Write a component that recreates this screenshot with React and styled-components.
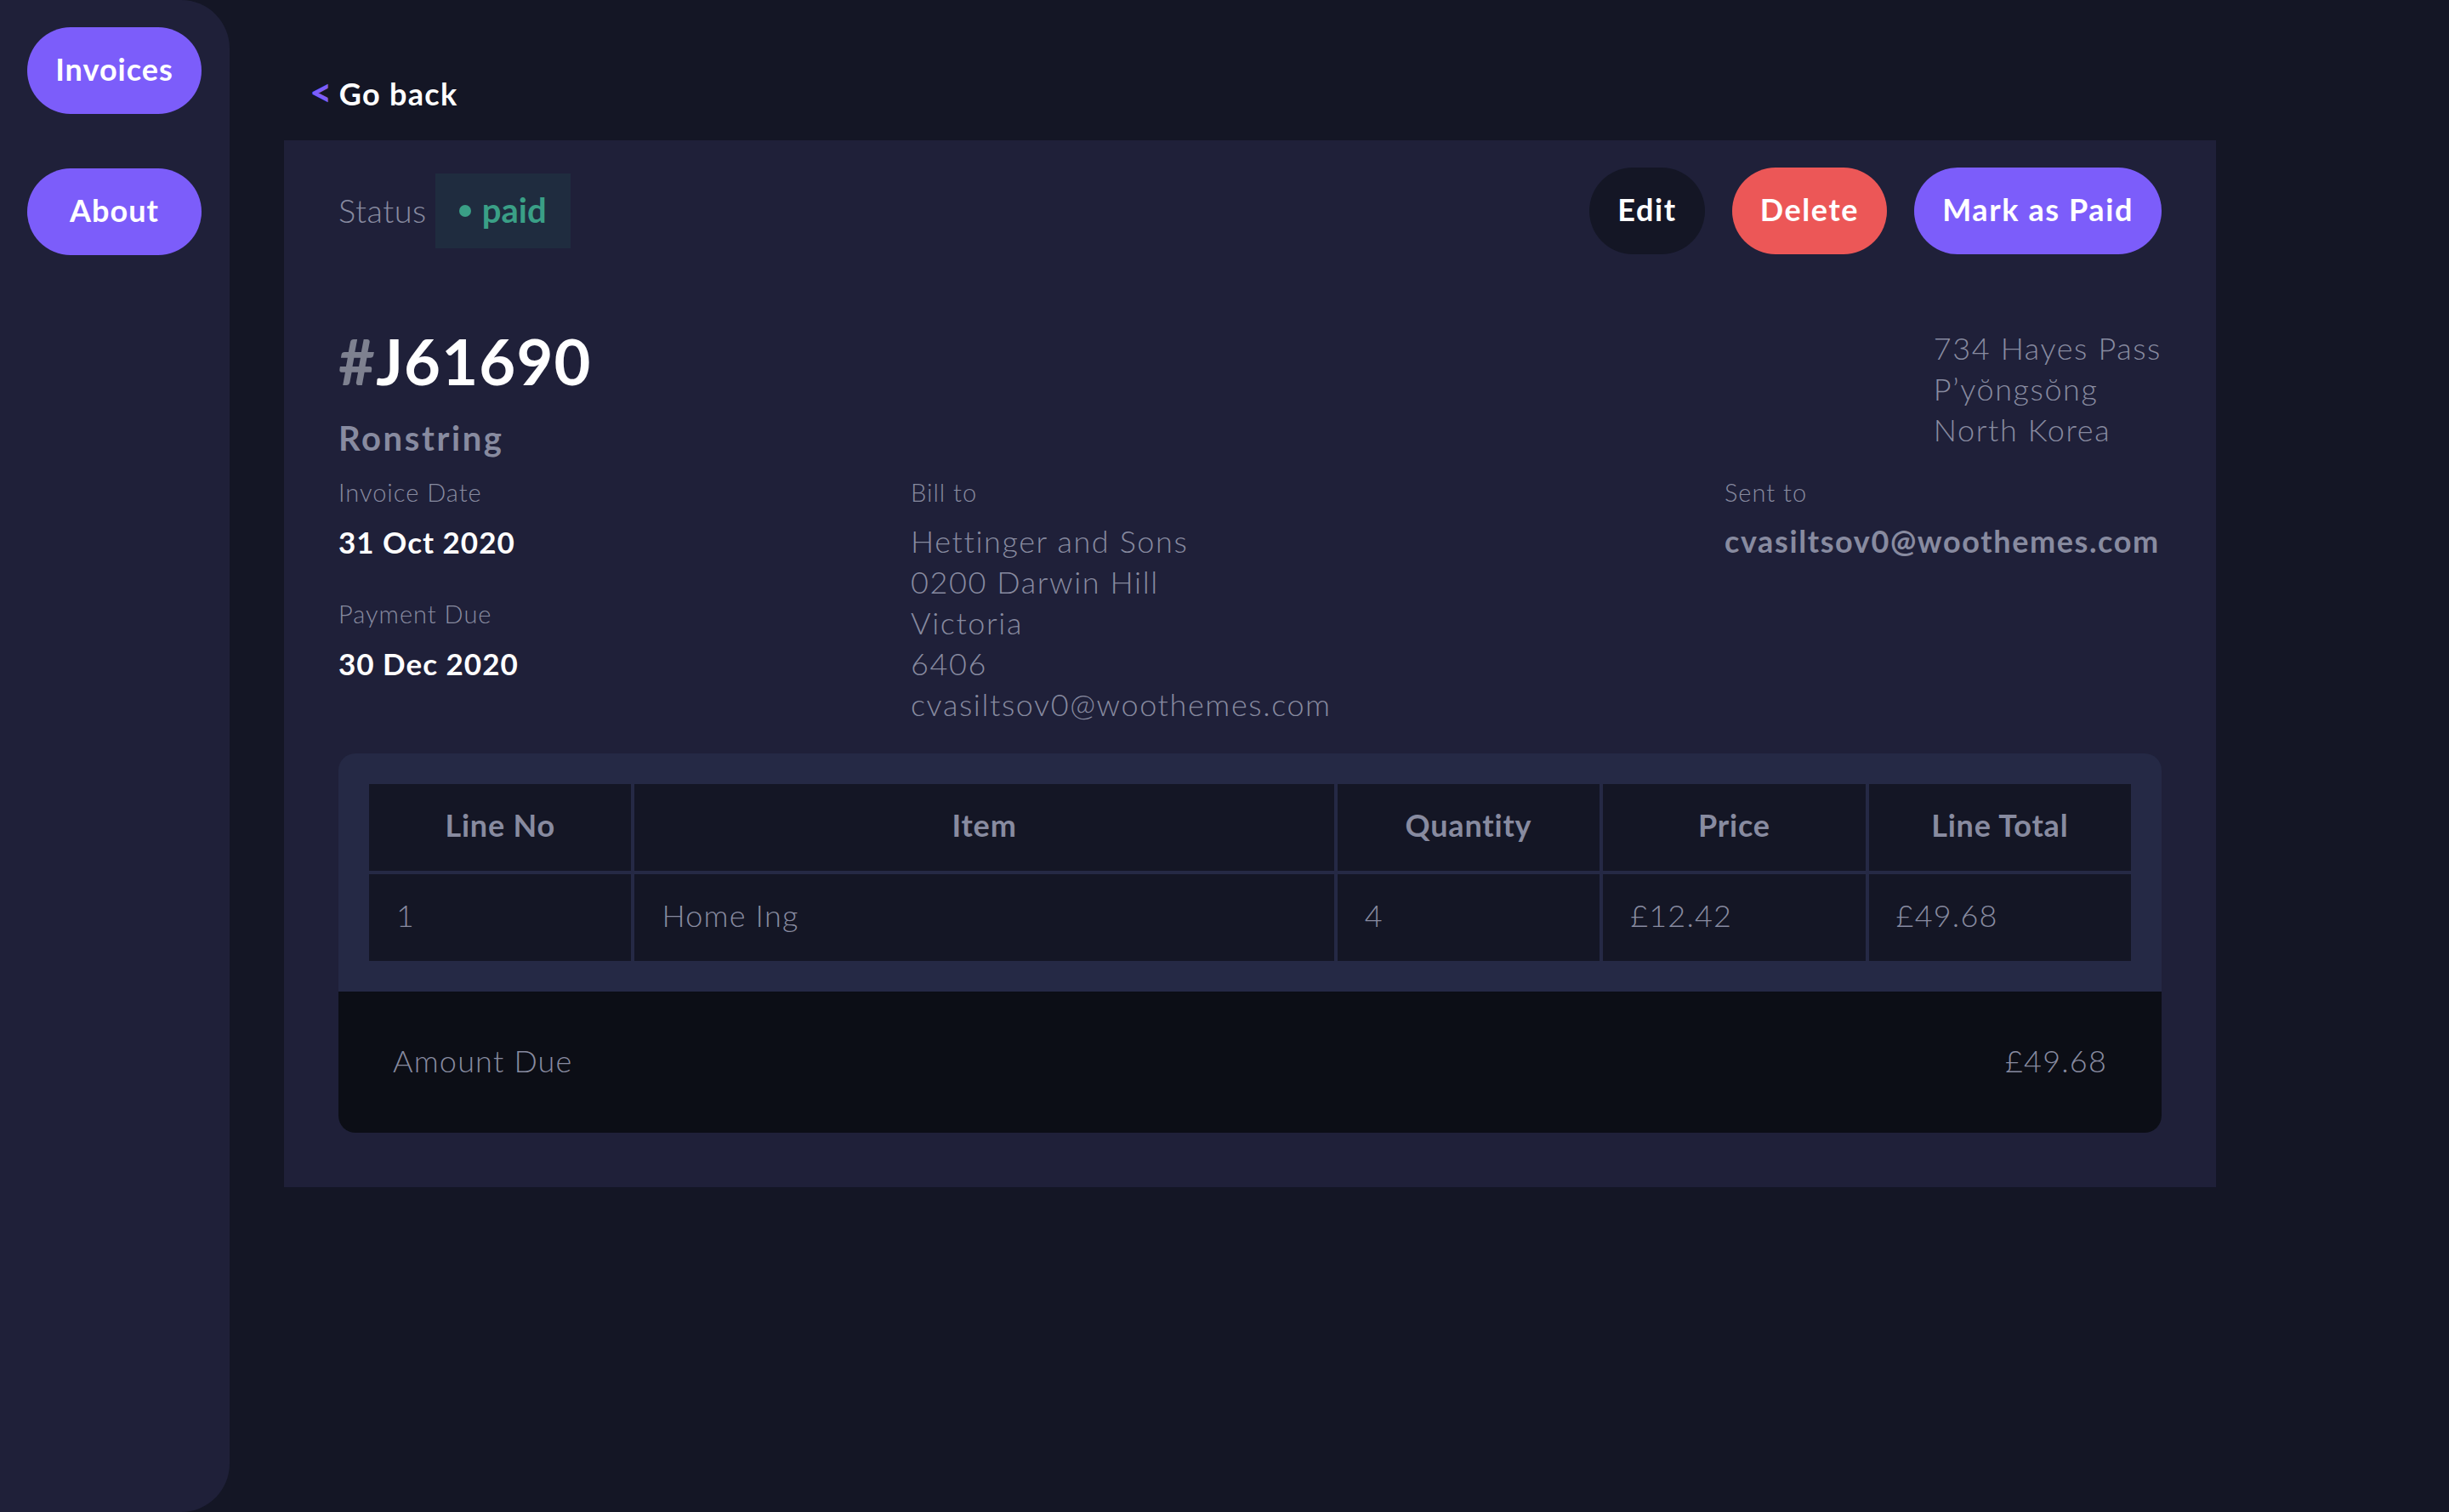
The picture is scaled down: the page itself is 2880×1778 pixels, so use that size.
import React from "react";
import styled, { createGlobalStyle } from "styled-components";

const GlobalStyle = createGlobalStyle`
  html, body {
    margin: 0;
    padding: 0;
    background: #141625;
  }
  body {
    font-family: Lato, "Open Sans", "Liberation Sans", sans-serif;
    color: #ffffff;
  }
  * { box-sizing: border-box; }
`;

const Layout = styled.div`
  display: flex;
  min-height: 100vh;
`;

const Sidebar = styled.nav`
  width: 270px;
  height: 100vh;
  flex-shrink: 0;
  background: #1f2039;
  border-radius: 0 57px 57px 0;
  padding: 32px;
  display: flex;
  flex-direction: column;
  gap: 64px;
`;

const NavButton = styled.a`
  display: flex;
  align-items: center;
  justify-content: center;
  width: 205px;
  height: 102px;
  padding-bottom: 4px;
  border-radius: 51px;
  background: #7c5dfa;
  color: #ffffff;
  font-weight: 700;
  font-size: 36px;
  letter-spacing: 1px;
  text-decoration: none;
`;

const Main = styled.main`
  flex: 1;
  padding: 88px 0 0 64px;
`;

const BackLink = styled.a`
  display: flex;
  align-items: center;
  gap: 8px;
  height: 44px;
  margin: 0 0 33px 30px;
  font-size: 36px;
  line-height: 44px;
  font-weight: 700;
  color: #ffffff;
  letter-spacing: 1.3px;
  text-decoration: none;
`;

const BackArrow = styled.span`
  color: #7c5dfa;
  font-size: 46px;
  line-height: 44px;
  font-weight: 700;
  letter-spacing: 0;
  padding-bottom: 4px;
`;

const Card = styled.section`
  width: 2272px;
  background: #1f2039;
  padding: 32px 64px 64px;
`;

const CardHeader = styled.header`
  display: flex;
  align-items: center;
  justify-content: space-between;
  height: 102px;
`;

const StatusGroup = styled.div`
  display: flex;
  align-items: center;
  gap: 10px;
`;

const StatusLabel = styled.span`
  font-size: 38px;
  font-weight: 300;
  color: #888ba0;
  letter-spacing: 0.5px;
  padding-bottom: 3px;
`;

const Badge = styled.span`
  display: flex;
  align-items: center;
  gap: 13px;
  height: 88px;
  padding: 0 28px 3px;
  background: #1f2c3f;
  color: #3a9f86;
  font-size: 40px;
  font-weight: 700;
`;

const Dot = styled.span`
  width: 14px;
  height: 14px;
  border-radius: 50%;
  background: #3a9f86;
  margin-top: 3px;
`;

const Actions = styled.div`
  display: flex;
  gap: 32px;
`;

const ActionButton = styled.button`
  height: 102px;
  padding: 0 33px 4px;
  border: none;
  border-radius: 51px;
  font-family: inherit;
  font-size: 36px;
  font-weight: 700;
  letter-spacing: 1.6px;
  color: #ffffff;
  cursor: pointer;
  background: ${(p) =>
    p.$variant === "delete" ? "#ec5757" : p.$variant === "paid" ? "#7c5dfa" : "#141625"};
`;

const TopRow = styled.div`
  display: flex;
  justify-content: space-between;
  align-items: flex-start;
  margin-top: 86px;
`;

const IdBlock = styled.div`
  padding-top: 3px;
`;

const InvoiceId = styled.h1`
  margin: 0;
  font-size: 74px;
  line-height: 74px;
  font-weight: 700;
  color: #ffffff;
  letter-spacing: 1.2px;
`;

const Hash = styled.span`
  color: #7e8190;
`;

const ClientName = styled.h2`
  margin: 33px 0 0;
  font-size: 40px;
  line-height: 40px;
  font-weight: 700;
  color: #888ba0;
  letter-spacing: 2.6px;
`;

const Lines = styled.div`
  display: flex;
  flex-direction: column;
  margin-top: ${(p) => p.$offset || 0}px;
  font-size: 36px;
  line-height: 48px;
  font-weight: 300;
  color: #888ba0;
  letter-spacing: 1.6px;
`;

const DetailsGrid = styled.div`
  display: grid;
  grid-template-columns: 673px 957px 1fr;
  margin-top: 26px;
`;

const Column = styled.div`
  display: flex;
  flex-direction: column;
`;

const Label = styled.span`
  font-size: 29px;
  line-height: 36px;
  font-weight: 300;
  color: #888ba0;
  letter-spacing: 1px;
  margin-top: ${(p) => p.$gap || 0}px;
`;

const DateValue = styled.span`
  margin-top: 18px;
  font-size: 35px;
  line-height: 44px;
  font-weight: 700;
  color: #ffffff;
  letter-spacing: 1px;
`;

const Email = styled.span`
  margin-top: 15px;
  font-size: 36px;
  line-height: 48px;
  font-weight: 700;
  color: #888ba0;
  letter-spacing: 1.6px;
`;

const ItemsPanel = styled.div`
  margin-top: 34px;
  background: #252945;
  border-radius: 20px;
  overflow: hidden;
`;

const TableWrap = styled.div`
  padding: 32px;
`;

const Table = styled.table`
  width: 100%;
  table-layout: fixed;
  border-collapse: separate;
  border-spacing: 4px;
`;

const HeadCell = styled.th`
  width: ${(p) => p.$w};
  height: 102px;
  padding: 0 32px 6px;
  background: #141625;
  color: #888ba0;
  font-size: 36px;
  font-weight: 700;
  text-align: center;
  letter-spacing: 0.8px;
`;

const Cell = styled.td`
  height: 102px;
  padding: 0 32px 6px;
  background: #141625;
  color: #888ba0;
  font-size: 36px;
  font-weight: 300;
  text-align: left;
  letter-spacing: 1.2px;
`;

const AmountBar = styled.div`
  display: flex;
  align-items: center;
  justify-content: space-between;
  height: 166px;
  padding: 0 64px 4px;
  background: #0c0e16;
  color: #888ba0;
  font-size: 36px;
  font-weight: 300;
  letter-spacing: 1.2px;
`;

const columns = [
  { title: "Line No", w: "15%" },
  { title: "Item", w: "40%" },
  { title: "Quantity", w: "15%" },
  { title: "Price", w: "15%" },
  { title: "Line Total", w: "15%" },
];

const rows = [["1", "Home Ing", "4", "£12.42", "£49.68"]];

export default function App() {
  return (
    <>
      <GlobalStyle />
      <Layout>
        <Sidebar>
          <NavButton>Invoices</NavButton>
          <NavButton>About</NavButton>
        </Sidebar>
        <Main>
          <BackLink>
            <BackArrow>&lt;</BackArrow>
            Go back
          </BackLink>
          <Card>
            <CardHeader>
              <StatusGroup>
                <StatusLabel>Status</StatusLabel>
                <Badge>
                  <Dot />
                  paid
                </Badge>
              </StatusGroup>
              <Actions>
                <ActionButton $variant="edit">Edit</ActionButton>
                <ActionButton $variant="delete">Delete</ActionButton>
                <ActionButton $variant="paid">Mark as Paid</ActionButton>
              </Actions>
            </CardHeader>

            <TopRow>
              <IdBlock>
                <InvoiceId>
                  <Hash>#</Hash>J61690
                </InvoiceId>
                <ClientName>Ronstring</ClientName>
              </IdBlock>
              <Lines>
                <span>734 Hayes Pass</span>
                <span>P’yŏngsŏng</span>
                <span>North Korea</span>
              </Lines>
            </TopRow>

            <DetailsGrid>
              <Column>
                <Label>Invoice Date</Label>
                <DateValue>31 Oct 2020</DateValue>
                <Label $gap={45}>Payment Due</Label>
                <DateValue>30 Dec 2020</DateValue>
              </Column>
              <Column>
                <Label>Bill to</Label>
                <Lines $offset={15}>
                  <span>Hettinger and Sons</span>
                  <span>0200 Darwin Hill</span>
                  <span>Victoria</span>
                  <span>6406</span>
                  <span>cvasiltsov0@woothemes.com</span>
                </Lines>
              </Column>
              <Column>
                <Label>Sent to</Label>
                <Email>cvasiltsov0@woothemes.com</Email>
              </Column>
            </DetailsGrid>

            <ItemsPanel>
              <TableWrap>
                <Table>
                  <thead>
                    <tr>
                      {columns.map((c) => (
                        <HeadCell key={c.title} $w={c.w}>
                          {c.title}
                        </HeadCell>
                      ))}
                    </tr>
                  </thead>
                  <tbody>
                    {rows.map((r, i) => (
                      <tr key={i}>
                        {r.map((v, j) => (
                          <Cell key={j}>{v}</Cell>
                        ))}
                      </tr>
                    ))}
                  </tbody>
                </Table>
              </TableWrap>
              <AmountBar>
                <span>Amount Due</span>
                <span>£49.68</span>
              </AmountBar>
            </ItemsPanel>
          </Card>
        </Main>
      </Layout>
    </>
  );
}
